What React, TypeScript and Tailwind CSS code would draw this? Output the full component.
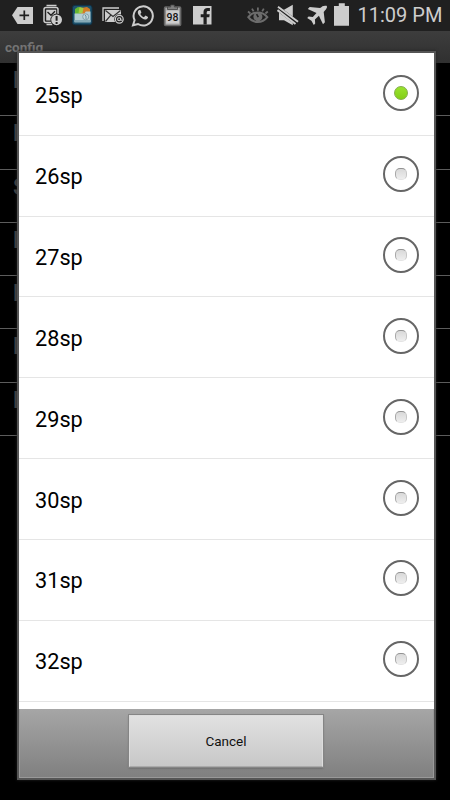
import type { ReactNode } from 'react';

const sizes = ['25sp', '26sp', '27sp', '28sp', '29sp', '30sp', '31sp', '32sp'];
const settings = ['F', 'F', 'S', 'F', 'F', 'F', 'F'];

function Icon({ children }: { children: ReactNode }) {
  return (
    <svg className="h-[31px] w-[30px] shrink-0" viewBox="0 0 30 31" fill="none">
      {children}
    </svg>
  );
}

function StatusBar() {
  return (
    <header className="flex h-[31px] items-center bg-[#202020] pl-2 text-[#cdcdcd]">
      <Icon>
        <path d="M4 15.2 9.5 7H25v17H9.5Z" fill="#cdcdcd" />
        <path d="M16.3 10.5v9.6M11.5 15.3h9.6" stroke="#202020" strokeWidth="1.7" />
      </Icon>
      <Icon>
        <path d="M8.5 5.5h10M8.5 24.5h6" stroke="#cdcdcd" strokeWidth="1.6" />
        <rect x="6" y="7.5" width="14" height="15" rx="2" stroke="#cdcdcd" strokeWidth="1.5" />
        <rect x="8.2" y="9.7" width="10" height="10.8" fill="#cdcdcd" />
        <path d="m9.5 12 3.5 3.3 4-4" stroke="#202020" strokeWidth="1.4" />
        <circle cx="18.6" cy="19.8" r="6.2" fill="#202020" />
        <circle cx="18.6" cy="19.8" r="5.4" fill="#cdcdcd" />
        <path d="M18.6 16v4.8M18.6 22v1.9" stroke="#202020" strokeWidth="2" />
      </Icon>
      <Icon>
        <rect x="4.5" y="5.3" width="19.5" height="19.5" rx="2.5" fill="#1d526d" stroke="#103145" />
        <path d="M7 9 10 7l4 1v6H7Z" fill="#65b632" />
        <path d="m13 8 6-1 3 2v5h-9Z" fill="#d27c26" />
        <path d="m11.5 7 4 1-1 5h-4Z" fill="#a4cb42" />
        <path d="M6.5 13.5h10l1.2-2h4.8v10.8h-16Z" fill="#b4ced4" />
        <path d="M6.5 20h16v2.3h-16Z" fill="#86aab7" />
        <circle cx="17.7" cy="16.8" r="3" fill="#c0d5da" stroke="#7695a0" strokeWidth=".8" />
        <path d="m17 15 1 1v3" stroke="#69909e" />
      </Icon>
      <Icon>
        <path d="M5 21V8h16" stroke="#cdcdcd" strokeWidth="1.3" />
        <path d="M7 10h16v12H7Z" fill="#cdcdcd" />
        <path d="m7.5 10.5 7.5 6 7.5-6M7.5 21.5l5.3-6.3" stroke="#303030" strokeWidth="1.2" />
        <circle cx="21.3" cy="19.3" r="5" fill="#202020" />
        <circle cx="21.3" cy="19.3" r="3.9" stroke="#cdcdcd" strokeWidth="1.2" />
        <circle cx="21.1" cy="19.3" r="1.5" stroke="#cdcdcd" strokeWidth="1.1" />
        <path d="M22.7 17.7v2.5h1.8" stroke="#cdcdcd" />
      </Icon>
      <Icon>
        <path d="m5 25.3 1.6-5.1A9.6 9.6 0 1 1 10 24Z" stroke="#cdcdcd" strokeWidth="2" />
        <path d="M11 10c-1.9 1.6-1.5 4 .8 6.3 2.3 2.7 5.2 4.1 7.1 2.7 1.4-1 1.3-1.8.8-2.2l-2.2-1.2-1.6 1.6c-1.6-.6-2.8-1.7-3.6-3.2l1.1-1.4-1-2.6Z" fill="#cdcdcd" />
      </Icon>
      <Icon>
        <rect x="6.6" y="7" width="16" height="18.5" rx="1" fill="#aaa" stroke="#686868" strokeWidth="1.6" />
        <path d="M8.2 10.5H21v13H8.2Z" fill="#cdcdcd" />
        <path d="M9.5 9.5V7h3.2V5h3.6v2h3.2v2.5Z" fill="#808080" stroke="#454545" strokeWidth=".8" />
        <text x="14.5" y="20.8" textAnchor="middle" className="font-[Roboto,sans-serif] text-[10.5px] font-medium" fill="#151515">98</text>
      </Icon>
      <Icon>
        <rect x="5" y="6" width="18.5" height="18.5" fill="#cdcdcd" />
        <path d="M15.5 24.5v-7.3h-2.8v-3h2.8v-2.1c0-2.8 1.7-4 4-4h2.4v2.8h-1.7c-1.1 0-1.5.6-1.5 1.5v1.8h3l-.4 3h-2.6v7.3Z" fill="#202020" />
      </Icon>
      <div className="ml-[25px] flex">
        <Icon>
          <path d="M5.3 17.2c5-6.3 14-6.3 19 0-5 6.5-14 6.5-19 0Z" stroke="#6c6c6c" strokeWidth="2" />
          <circle cx="14.9" cy="16.8" r="4.5" fill="#6c6c6c" />
          <path d="m13.6 14.2 1.7 3" stroke="#202020" strokeWidth="1.6" />
          <path d="M14.9 7.5v3.2M9 8.6l1.6 2.8M20.8 8.6l-1.6 2.8M5 11.5l2.4 2M24.8 11.5l-2.4 2" stroke="#6c6c6c" strokeWidth="1.8" />
        </Icon>
        <Icon>
          <path d="M6 9.8h5l8.8-5v20.4L11 20.3H6Z" fill="#cdcdcd" />
          <path d="M4.5 8.2 25 23.7" stroke="#202020" strokeWidth="5" />
          <path d="m5 6.7 20 15.1M4.5 10.1 22.5 24" stroke="#cdcdcd" strokeWidth="2" />
        </Icon>
        <Icon>
          <path d="m23.6 5.8.5 1.2c-.6 1.8-1.5 3-3.4 4.9l1.2 10.4-1.9 2-4.1-8.6-4 3.7.3 4.2-1.4 1.4-2.4-4.3L4.2 18l1.4-1.4 4.2.5 3.7-4.1-8.7-4 1.9-2 10.4 1.1c2.1-2 3.5-2.8 6.5-2.3Z" fill="#cdcdcd" />
        </Icon>
      </div>
      <svg className="-ml-px h-[31px] w-[18px]" viewBox="0 0 18 31">
        <path d="M2 6h4.8V3.3h6V6H17v19.8H2Z" fill="#cdcdcd" />
      </svg>
      <span className="ml-[7.5px] whitespace-nowrap text-[20px] leading-[31px]">11:09 PM</span>
    </header>
  );
}

function Radio({ checked }: { checked: boolean }) {
  return (
    <span className="flex size-[36px] items-center justify-center rounded-full border-2 border-[#666]">
      <span
        className={
          checked
            ? 'size-[14px] rounded-full border border-[#83ad4b] bg-linear-to-b from-[#99e32e] to-[#83ce16]'
            : 'size-[12px] rounded-[5px] border border-t-[#929292] border-r-[#c7c7c7] border-b-[#e4e4e4] border-l-[#a8a8a8] bg-linear-to-b from-[#d9d9d9] to-[#eeeeee]'
        }
      />
    </span>
  );
}

export default function App() {
  return (
    <div className="relative h-[800px] w-[450px] overflow-hidden bg-black font-[Roboto,sans-serif]">
      <StatusBar />
      <div className="h-8 bg-linear-to-b from-[#3d3d3d] to-[#303030] pl-[5px] pt-[8px] text-[13.5px] font-bold leading-[17px] text-[#747474]">
        config
      </div>
      <ul>
        {settings.map((letter, i) => (
          <li key={i} className="h-[53.3px] border-b border-[#5c5c5c] pl-[13px] pt-[3px] text-[24px] font-bold leading-[28px] text-[#484848]">
            {letter}
          </li>
        ))}
      </ul>

      <section className="absolute left-[17px] top-[51px] flex h-[729px] w-[419px] flex-col border-2 border-[#555] shadow-[0_0_3px_#222]">
        <ul className="h-[656px] shrink-0 overflow-hidden bg-white">
          {sizes.map((size, i) => (
            <li key={size} className="flex h-[80.83px] items-center justify-between pl-4 pr-[15px] shadow-[0_1px_0_#e5e5e5] first:mt-[1px]">
              <span className="pt-[4px] text-[21.7px] leading-[28px] text-black">{size}</span>
              <span className="-mt-[2px]">
                <Radio checked={i === 0} />
              </span>
            </li>
          ))}
        </ul>
        <footer className="flex h-[69px] justify-center border border-t-0 border-[#999] bg-linear-to-b from-[#a6a6a6] to-[#808080] pt-[6px]">
          <button className="mr-[1px] h-[52px] w-[194px] border border-[#ddd] border-b-[#aaa] bg-linear-to-b from-[#e1e1e1] to-[#c8c8c8] text-[13.5px] text-[#111] shadow-[0_0_0_1px_#858585,0_1px_2px_#555]">
            Cancel
          </button>
        </footer>
      </section>
    </div>
  );
}
